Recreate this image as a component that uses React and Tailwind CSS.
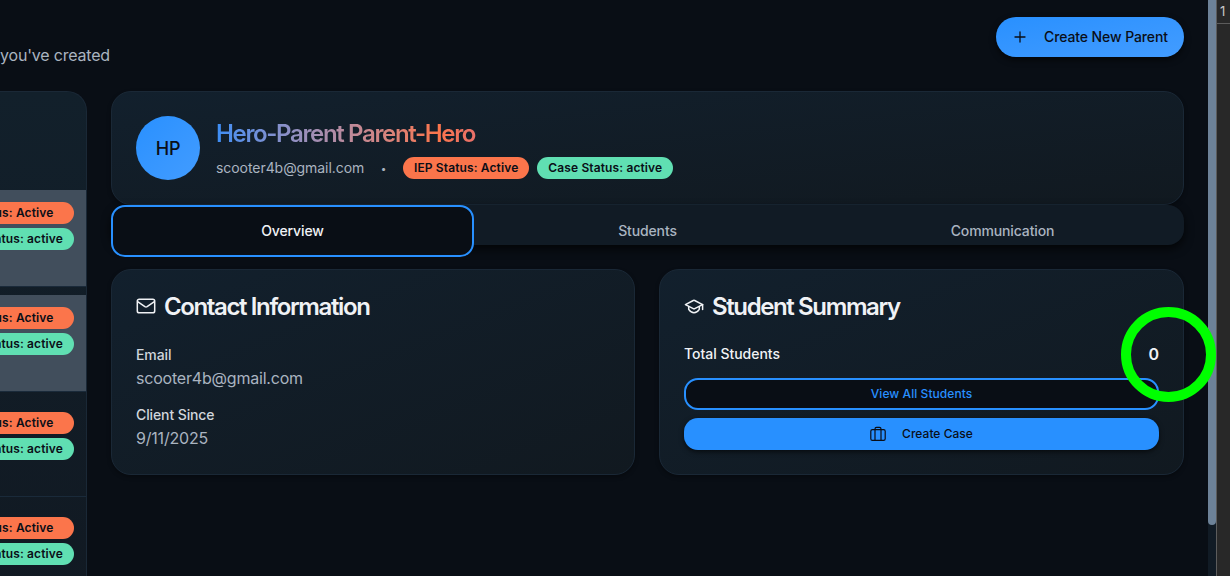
const people = [true, true, false, false];

function Badge({ tone, children }) {
  return (
    <span className={`block h-[22px] whitespace-nowrap rounded-full px-[11px] text-[12px] font-semibold leading-[22px] tracking-[0.01em] text-[#0a0e17] ${tone === "orange" ? "bg-[#fb754b]" : "bg-[#60dfb2]"}`}>
      {children}
    </span>
  );
}

function PlusIcon() {
  return (
    <svg width="16" height="16" viewBox="0 0 16 16" fill="none" stroke="currentColor" strokeWidth="1.3" strokeLinecap="round">
      <path d="M8 3 V13 M3 8 H13" />
    </svg>
  );
}

function MailIcon() {
  return (
    <svg className="-mt-[2px]" width="20" height="20" viewBox="0 0 20 20" fill="none" stroke="currentColor" strokeWidth="1.5" strokeLinecap="round" strokeLinejoin="round">
      <rect x="1.3" y="3.2" width="17.4" height="13.6" rx="1.9" />
      <path d="M2 5.8 L8.9 10.6 Q10 11.3 11.1 10.6 L18 5.8" />
    </svg>
  );
}

function CapIcon() {
  return (
    <svg className="-mt-[2px]" width="20" height="20" viewBox="0 0 20 20" fill="none" stroke="currentColor" strokeWidth="1.5" strokeLinecap="round" strokeLinejoin="round">
      <path d="M9.3 4.5 Q10 4.2 10.7 4.5 L18.6 8.6 L10.7 12.7 Q10 13 9.3 12.7 L1.4 8.6 Z" />
      <path d="M4.7 10.6 V13.3 Q7 16.7 10 16.7 Q13 16.7 15.3 13.3 V10.6" />
      <path d="M18.6 8.6 V13.6" />
    </svg>
  );
}

function CaseIcon() {
  return (
    <svg width="16" height="16" viewBox="0 0 16 16" fill="none" stroke="currentColor" strokeWidth="1.2" strokeLinecap="round" strokeLinejoin="round">
      <rect x="0.8" y="3.6" width="14.4" height="10.8" rx="1.6" />
      <path d="M5 14.4 V2.9 Q5 1.4 6.5 1.4 H9.5 Q11 1.4 11 2.9 V14.4" />
    </svg>
  );
}

const card = "rounded-[20px] border border-[#1a2836] bg-linear-to-br from-[#12202d] to-[#111920] shadow-[0_2px_4px_rgba(0,0,0,0.3)]";
const cardTitle = "-mt-[3px] flex h-8 items-center gap-2 whitespace-nowrap text-[24px] font-semibold tracking-[-1.38px]";
const fieldLabel = "text-[14px] font-medium leading-5 tracking-[-0.11px] text-[#d0d5dc]";
const fieldValue = "mt-[2px] text-[16px] leading-[22px] tracking-[-0.2px] text-[#aab4c0]";

export default function App() {
  return (
    <div className="flex h-[576px] w-[1230px] overflow-hidden bg-[#090e15] font-['Inter',sans-serif] text-[#f0f2f5]">
      <main className="flex w-[1208px] flex-col">
        <header className="flex h-[91px] shrink-0 items-start justify-between pr-6 pt-[17px]">
          <p className="mt-[26px] text-[16px] leading-6 tracking-[-0.19px] text-[#aab4c0]">you've created</p>
          <button className="flex h-10 w-[188px] items-center rounded-full bg-linear-to-br from-[#2890ff] to-[#429cff] pl-4 text-[14px] font-medium tracking-[-0.1px] text-[#0a0e17] shadow-[0_3px_6px_rgba(0,0,0,0.6)]">
            <PlusIcon />
            <span className="-mt-px ml-4 whitespace-nowrap">Create New Parent</span>
          </button>
        </header>
        <div className="flex flex-1 gap-6 pr-6">
          <aside className="h-[520px] w-[87px] shrink-0 overflow-hidden rounded-tr-[20px] border-r border-t border-[#1a2836] bg-linear-to-b from-[#12202b] to-[#111922]">
            <div className="h-[98px]" />
            <div className="flex flex-col gap-2">
              {people.map((selected, i) => (
                <div key={i} className={`flex h-[97px] items-start justify-end border-b border-[#1a2a3a] pr-3 pt-3 ${selected ? "bg-[#414e5c]" : ""}`}>
                  <div className="flex flex-col gap-1">
                    <Badge tone="orange">IEP Status: Active</Badge>
                    <Badge tone="green">Case Status: active</Badge>
                  </div>
                </div>
              ))}
            </div>
          </aside>
          <section className="flex w-[1073px] flex-col">
            <div className={`flex h-[114px] items-start gap-4 p-6 ${card}`}>
              <div className="flex size-16 shrink-0 items-center justify-center rounded-full bg-linear-to-br from-[#2890ff] to-[#429cff] text-[18px] font-medium tracking-[-0.2px] text-[#0a0e17]">HP</div>
              <div>
                <h1 className="mt-[2px] w-fit whitespace-nowrap bg-linear-to-r from-[#3b8ef5] via-[#fb754b] via-85% to-[#e8706a] bg-clip-text pr-[2px] text-[24px] font-semibold leading-8 tracking-[-1.35px] text-transparent">Hero-Parent Parent-Hero</h1>
                <div className="mt-[7px] flex h-[22px] items-center text-[14px] text-[#aab4c0]">
                  <span className="-mt-[2px] w-[148px] whitespace-nowrap tracking-[-0.06px]">scooter4b@gmail.com</span>
                  <span className="w-[39px] text-center text-[10px]">•</span>
                  <Badge tone="orange">IEP Status: Active</Badge>
                  <span className="w-2" />
                  <Badge tone="green">Case Status: active</Badge>
                </div>
              </div>
            </div>
            <nav className="flex h-10 shrink-0 items-start rounded-[16px] bg-[#111b25] text-[14px] font-medium tracking-[-0.13px] text-[#aab4c0] shadow-[0_4px_10px_rgba(0,0,0,0.7)]">
              <span className="flex h-[52px] w-[363px] items-center justify-center rounded-[14px] border-2 border-[#2890ff] bg-[#090e15] pb-[2px] text-[#f0f2f5]">Overview</span>
              <span className="flex h-[52px] w-[347px] items-center justify-center pb-[2px]">Students</span>
              <span className="flex h-[52px] w-[363px] items-center justify-center pb-[2px]">Communication</span>
            </nav>
            <div className="mt-6 flex gap-6">
              <div className={`h-[206px] w-[524px] p-6 ${card}`}>
                <h2 className={cardTitle}><MailIcon />Contact Information</h2>
                <p className={`mt-[22px] ${fieldLabel}`}>Email</p>
                <p className={fieldValue}>scooter4b@gmail.com</p>
                <p className={`mt-4 ${fieldLabel}`}>Client Since</p>
                <p className={fieldValue}>9/11/2025</p>
              </div>
              <div className={`h-[206px] w-[525px] p-6 ${card}`}>
                <h2 className={cardTitle}><CapIcon />Student Summary</h2>
                <div className="relative mt-[19px] flex h-6 items-center justify-between">
                  <span className="-mt-px text-[14px] font-medium tracking-[-0.02px]">Total Students</span>
                  <span className="text-[16px] font-semibold">0</span>
                  <span className="absolute -right-[57px] -top-[35px] size-[95px] rounded-full border-[10px] border-[#00ff00]" />
                </div>
                <button className="mt-3 flex h-8 w-[475px] items-center justify-center rounded-[14px] border-2 border-[#2890ff] bg-[#090e15] text-[12px] font-medium tracking-[0.06px] text-[#2890ff]">View All Students</button>
                <button className="mt-2 flex h-8 w-[475px] items-center justify-center gap-4 rounded-[14px] bg-[#2890ff] text-[12px] font-medium tracking-[0.02px] text-[#0a0e17] shadow-[0_2px_5px_rgba(0,0,0,0.6)]"><CaseIcon />Create Case</button>
              </div>
            </div>
          </section>
        </div>
      </main>
      <div className="w-2 bg-[#111b25]"><div className="h-[525px] rounded-b-[4px] bg-[#6d8298]" /></div>
      <div className="w-[14px] border-l border-[#5c5c5c] bg-[#282828]">
        <div className="h-6 border-b border-[#5c5c5c] pl-[3px] pt-[3px] text-[13px] leading-4 text-[#c8c8c8]">1</div>
      </div>
    </div>
  );
}
